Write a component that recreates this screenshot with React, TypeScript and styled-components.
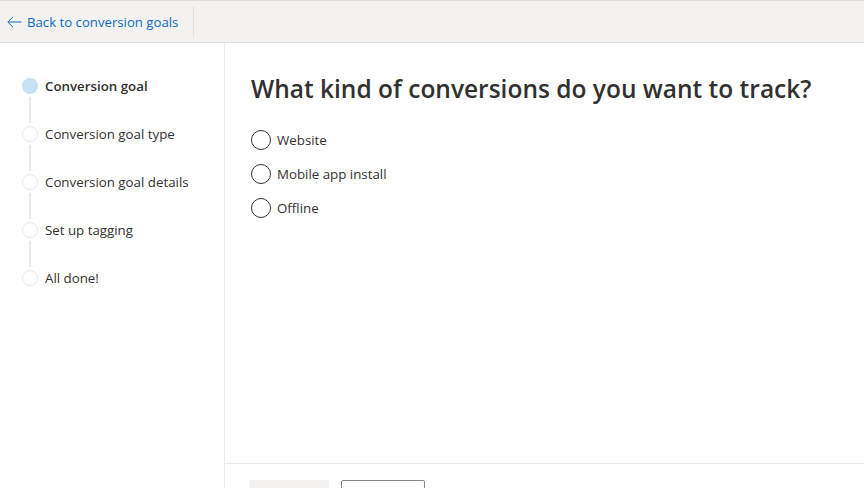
import React from "react";
import styled, { createGlobalStyle } from "styled-components";

const Global = createGlobalStyle`
  html, body { margin: 0; padding: 0; background: #fff; }
  body { font-family: "Segoe UI", "Open Sans", "Noto Sans", sans-serif; color: #323130; overflow: hidden; }
  * { box-sizing: border-box; }
`;

const Page = styled.div`
  display: flex;
  flex-direction: column;
  width: 864px;
`;

const TopBar = styled.header`
  height: 43px;
  background: #f3f2f1;
  border-top: 1px solid #e1dfdd;
  border-bottom: 1px solid #e1dfdd;
  display: flex;
  align-items: center;
`;

const BackLink = styled.a`
  display: flex;
  align-items: center;
  gap: 5px;
  padding-left: 7px;
  padding-right: 15px;
  font-size: 13.2px;
  color: #0f6cbd;
  text-decoration: none;
  cursor: pointer;
`;

const Divider = styled.div`
  width: 1px;
  height: 31px;
  background: #e1dfdd;
`;

const Body = styled.div`
  display: flex;
  flex: 1;
`;

const Sidebar = styled.nav`
  width: 225px;
  border-right: 1px solid #edebe9;
  padding: 35px 0 0 22px;
  min-height: 445px;
`;

const Step = styled.div`
  display: flex;
  align-items: center;
  gap: 7px;
  height: 16px;
  font-size: 13.3px;
  line-height: 16px;
  white-space: nowrap;
`;

const Dot = styled.span<{ $active?: boolean }>`
  width: 16px;
  height: 16px;
  border-radius: 50%;
  flex: none;
  background: ${(p) => (p.$active ? "#c7e0f4" : "#fff")};
  border: ${(p) => (p.$active ? "none" : "1px solid #edebe9")};
`;

const StepLabel = styled.span<{ $active?: boolean }>`
  font-weight: ${(p) => (p.$active ? 600 : 400)};
  color: #323130;
`;

const Connector = styled.div`
  width: 2px;
  height: 26px;
  margin: 3px 0 3px 7px;
  background: #edebe9;
`;

const Main = styled.main`
  flex: 1;
  display: flex;
  flex-direction: column;
`;

const Content = styled.section`
  height: 420px;
  padding: 30px 26px 0;
`;

const Heading = styled.h1`
  margin: 0 0 25px;
  font-size: 24.5px;
  font-weight: 600;
  line-height: 32px;
  color: #323130;
  white-space: nowrap;
`;

const RadioList = styled.div`
  display: flex;
  flex-direction: column;
  gap: 14px;
`;

const RadioRow = styled.label`
  display: flex;
  align-items: center;
  gap: 6px;
  height: 20px;
  font-size: 13.3px;
  color: #323130;
  cursor: pointer;
`;

const RadioCircle = styled.span`
  width: 20px;
  height: 20px;
  border-radius: 50%;
  border: 1px solid #323130;
  flex: none;
`;

const Footer = styled.footer`
  border-top: 1px solid #edebe9;
  padding: 16px 24px;
  display: flex;
  gap: 12px;
`;

const Button = styled.button<{ $variant?: "disabled" | "default" }>`
  height: 32px;
  width: ${(p) => (p.$variant === "disabled" ? "80px" : "84px")};
  border-radius: 2px;
  font-family: inherit;
  font-size: 14px;
  background: ${(p) => (p.$variant === "disabled" ? "#f3f2f1" : "#fff")};
  border: ${(p) => (p.$variant === "disabled" ? "1px solid #f3f2f1" : "1px solid #8a8886")};
  color: ${(p) => (p.$variant === "disabled" ? "#a19f9d" : "#323130")};
`;

const steps = [
  "Conversion goal",
  "Conversion goal type",
  "Conversion goal details",
  "Set up tagging",
  "All done!",
];

const options = ["Website", "Mobile app install", "Offline"];

export default function App() {
  return (
    <Page>
      <Global />
      <TopBar>
        <BackLink>
          <svg width="15" height="12" viewBox="0 0 15 12" fill="none">
            <path d="M14.5 6H1M6 0.8L0.8 6L6 11.2" stroke="#0f6cbd" strokeWidth="1" />
          </svg>
          Back to conversion goals
        </BackLink>
        <Divider />
      </TopBar>
      <Body>
        <Sidebar>
          {steps.map((s, i) => (
            <React.Fragment key={s}>
              <Step>
                <Dot $active={i === 0} />
                <StepLabel $active={i === 0}>{s}</StepLabel>
              </Step>
              {i < steps.length - 1 && <Connector />}
            </React.Fragment>
          ))}
        </Sidebar>
        <Main>
          <Content>
            <Heading>What kind of conversions do you want to track?</Heading>
            <RadioList>
              {options.map((o) => (
                <RadioRow key={o}>
                  <RadioCircle />
                  {o}
                </RadioRow>
              ))}
            </RadioList>
          </Content>
          <Footer>
            <Button $variant="disabled" disabled aria-label="Back" />
            <Button aria-label="Next" />
          </Footer>
        </Main>
      </Body>
    </Page>
  );
}
